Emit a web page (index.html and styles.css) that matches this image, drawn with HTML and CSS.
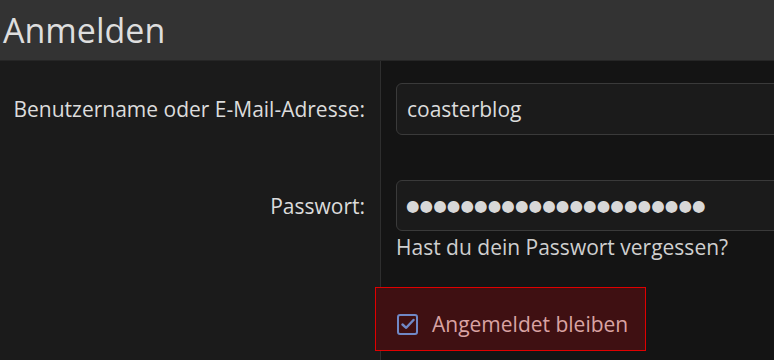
FILE: index.html
```html
<!DOCTYPE html>
<html lang="de">
<head>
    <meta charset="UTF-8">
    <meta name="viewport" content="width=device-width, initial-scale=1.0">
    <title>Anmelden</title>
    <link rel="stylesheet" href="styles.css">
</head>
<body>
    <div class="topbar">
        <h1>Anmelden</h1>
    </div>
    <form class="login">
        <label class="cell label user-label" for="user">Benutzername oder E-Mail-Adresse:</label>
        <div class="cell field user-field">
            <input type="text" id="user" value="coasterblog">
        </div>

        <label class="cell label pass-label" for="pass">Passwort:</label>
        <div class="cell field pass-field">
            <input type="text" id="pass" class="secret" value="●●●●●●●●●●●●●●●●●●●●●●">
            <a class="lost" href="#">Hast du dein Passwort vergessen?</a>
        </div>

        <div class="cell label"></div>
        <div class="cell field remember-field">
            <label class="remember">
                <span class="box">
                    <svg width="14" height="12" viewBox="0 0 14 12"><path d="M1.5 6.5 L5.2 9.8 L12.5 2" fill="none" stroke="#7088c6" stroke-width="2.4" stroke-linecap="round" stroke-linejoin="round"/></svg>
                </span>
                Angemeldet bleiben
            </label>
        </div>
    </form>
</body>
</html>
```
FILE: styles.css
```css
html, body {
    height: 100%;
}
body {
    margin: 0;
    font-family: "Open Sans", "Noto Sans", sans-serif;
    background-color: #141414;
    color: #dcdcdc;
    overflow: hidden;
    display: flex;
    flex-direction: column;
}
.topbar {
    height: 60px;
    background: #333;
    border-bottom: 1px solid #262626;
    display: flex;
    align-items: center;
}
h1 {
    margin: 0 0 0 3px;
    font-weight: 400;
    font-size: 34px;
    color: #dedede;
}
.login {
    flex: 1;
    display: grid;
    grid-template-columns: 381px minmax(0, 1fr);
    grid-template-rows: auto auto 1fr;
}
.cell.label {
    background: #1b1b1b;
    border-right: 1px solid #2e2e2e;
    text-align: right;
    padding-right: 15px;
    font-size: 21px;
    color: #dcdcdc;
}
.user-label {
    padding-top: 22px;
    line-height: 52px;
}
.pass-label {
    padding-top: 45px;
    line-height: 52px;
}
.field {
    padding-left: 15px;
}
.user-field,
.pass-field {
    overflow: hidden;
}
.user-field {
    padding-top: 22px;
}
.pass-field {
    padding-top: 45px;
}
input {
    box-sizing: border-box;
    width: 420px;
    height: 52px;
    background: #1b1b1b;
    border: 1px solid #3a3a3a;
    border-radius: 6px;
    color: #dcdcdc;
    font-family: inherit;
    font-size: 21px;
    padding: 0 10px;
    outline: none;
    display: block;
}
.secret {
    height: 51px;
    font-family: "DejaVu Sans", sans-serif;
    font-size: 15.5px;
    letter-spacing: 0.1px;
    padding-left: 9px;
    color: #d8d8d8;
}
.lost {
    display: block;
    margin-top: 2px;
    color: #cfcfcf;
    text-decoration: none;
    font-size: 21px;
}
.remember-field {
    padding-left: 0;
    padding-top: 26px;
}
.remember {
    box-sizing: border-box;
    margin-left: -6px;
    width: 271px;
    height: 64px;
    background: #3f1012;
    border: 1px solid #e00000;
    display: flex;
    align-items: center;
    gap: 14px;
    padding: 10px 0 0 21px;
    color: #d9a3a3;
    font-size: 21px;
}
.box {
    box-sizing: border-box;
    flex: none;
    width: 21px;
    height: 21px;
    border: 2px solid #7088c6;
    border-radius: 3px;
    display: flex;
    align-items: center;
    justify-content: center;
}
```
